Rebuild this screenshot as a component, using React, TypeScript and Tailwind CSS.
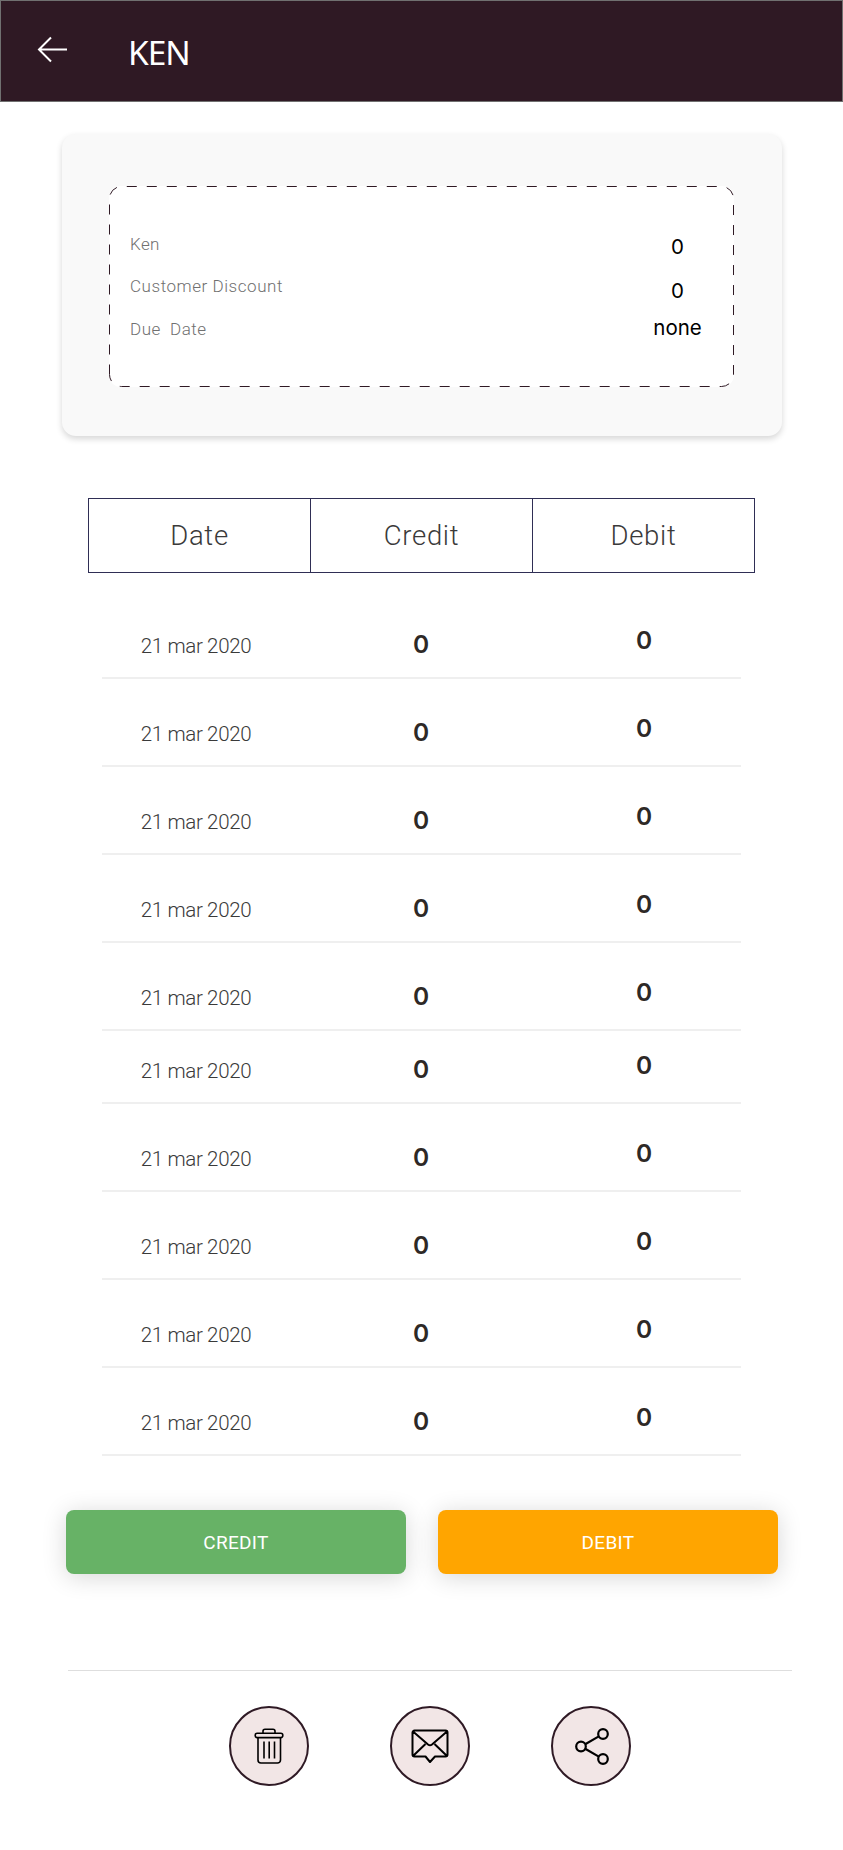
import React from 'react';

const rowHeights = [88, 88, 88, 88, 88, 73, 88, 88, 88, 88];

function IconButton({ label, children }: { label: string; children: React.ReactNode }) {
  return (
    <button
      aria-label={label}
      className="flex h-20 w-20 items-center justify-center rounded-full border-2 border-[#2f1a25] bg-[#f2e6e6]"
    >
      {children}
    </button>
  );
}

export default function App() {
  return (
    <div className="flex h-[1850px] w-[843px] flex-col bg-white font-['Roboto',sans-serif]">
      <header className="flex h-[102px] shrink-0 items-start border border-[#707070] bg-[#2f1924] text-white">
        <svg className="mt-[35px] ml-[36px] h-[28px] w-[32px]" viewBox="0 0 32 28" fill="none" stroke="currentColor" strokeWidth="2">
          <path d="M14 1.5 2 13.5l12 12M2 13.5h28" />
        </svg>
        <h1 className="mt-[28px] ml-[59px] font-['Noto_Sans',sans-serif] text-[33.5px] leading-[46px] tracking-[-1px]">KEN</h1>
      </header>

      <section className="mt-8 ml-[62px] h-[302px] w-[720px] shrink-0 rounded-[14px] bg-[#f9f9f9] pt-[52px] pl-[47px] shadow-[0_3px_6px_rgba(0,0,0,0.16)]">
        <div className="relative flex h-[201px] w-[625px] justify-between rounded-xl bg-white">
          <svg className="absolute inset-0 h-[201px] w-[625px]" viewBox="0 0 625 201" fill="none" stroke="#2f1924" strokeDasharray="10 10">
            <path d="M.5 188.5V12.5A12 12 0 0 1 12.5 .5H612.5A12 12 0 0 1 624.5 12.5V188.5A12 12 0 0 1 612.5 200.5H12.5A12 12 0 0 1 .5 188.5" />
          </svg>
          <div className="flex flex-col pt-[48px] pl-[21px] text-[17px] font-light whitespace-pre text-[#707070]">
            <span className="h-[42px] leading-[20px] tracking-[0.4px]">Ken</span>
            <span className="h-[43px] leading-[20px] tracking-[0.55px]">Customer Discount</span>
            <span className="leading-[20px] tracking-[0.5px]">{'Due  Date'}</span>
          </div>
          <div className="flex w-[113px] flex-col items-center pt-[47px] font-['Inter',sans-serif] text-[20.5px] text-black">
            <span className="h-[44px] leading-[28px]">0</span>
            <span className="h-[37px] leading-[28px]">0</span>
            <span className="leading-[28px]">none</span>
          </div>
        </div>
      </section>

      <div className="mt-[62px] ml-[88px] flex h-[75px] w-[667px] shrink-0 divide-x divide-[#2f2e55] border border-[#2f2e55] text-[27.5px] leading-[73px] font-light text-[#3a3a3a]">
        <div className="w-[222px] text-center tracking-[0.7px]">Date</div>
        <div className="w-[222px] text-center tracking-[0.7px]">Credit</div>
        <div className="flex-1 text-center tracking-[0.7px]">Debit</div>
      </div>

      <div className="mt-[18px] ml-[102px] w-[639px] shrink-0">
        {rowHeights.map((height, i) => (
          <div key={i} style={{ height }} className="flex items-end border-b-2 border-[#efefef] text-[#2d2926]">
            <span className="mb-[18px] w-[188px] text-center text-[20.5px] leading-[26px] font-light tracking-[-0.35px] text-[#3a3a3a]">21 mar 2020</span>
            <span className="mb-[18px] w-[262px] text-center font-['Inter',sans-serif] text-[24.5px] leading-[30px] font-semibold">0</span>
            <span className="mb-[22px] w-[184px] text-center font-['Inter',sans-serif] text-[24.5px] leading-[30px] font-semibold">0</span>
          </div>
        ))}
      </div>

      <div className="mt-[54px] ml-[66px] flex shrink-0 gap-8 text-[19px] font-[450] text-white">
        <button className="h-16 w-[340px] rounded-lg bg-[#67b266] pt-0.5 tracking-[0.3px] shadow-[0_3px_25px_rgba(0,0,0,0.16)]">CREDIT</button>
        <button className="h-16 w-[340px] rounded-lg bg-[#ffa500] pt-0.5 tracking-[0.3px] shadow-[0_3px_25px_rgba(0,0,0,0.16)]">DEBIT</button>
      </div>

      <nav className="mt-[96px] ml-[68px] flex w-[724px] shrink-0 gap-[81px] border-t border-[#dedede] pt-[35px] pl-[161px]">
        <IconButton label="Delete">
          <svg className="h-[36px] w-[30px]" viewBox="0 0 30 36" fill="none" stroke="#000" strokeWidth="1.6">
            <rect x="1.2" y="5.2" width="27.6" height="4.4" rx="2" />
            <path d="M9 5V3.2a2 2 0 0 1 2-2h8a2 2 0 0 1 2 2V5M4 9.8V32a3 3 0 0 0 3 3h16.500a3 3 0 0 0 3-3V9.800M10 13.500v17M15.200 13.500v17M20.500 13.500v17" />
          </svg>
        </IconButton>
        <IconButton label="Message">
          <svg className="h-[34px] w-[38px]" viewBox="0 0 38 34" fill="none" stroke="#000" strokeWidth="2" strokeLinejoin="round">
            <path d="M3.500 1.500h31a2 2 0 0 1 2 2v22a2 2 0 0 1-2 2H24l-5 5.500-4.500-5.500h-11a2 2 0 0 1-2-2v-22a2 2 0 0 1 2-2zM2 2.500l15 13q2 1.500 4 0l15-13M2 27l12.500-12M36 27 23.500 15" />
          </svg>
        </IconButton>
        <IconButton label="Share">
          <svg className="ml-px h-[37px] w-[34px]" viewBox="0 0 34 37" fill="none" stroke="#000" strokeWidth="2.2">
            <circle cx="6" cy="18.500" r="4.800" />
            <circle cx="28" cy="6" r="4.800" />
            <circle cx="28" cy="31" r="4.800" />
            <path d="m10.200 16.200 13.600-7.800M10.200 20.800l13.600 7.800" />
          </svg>
        </IconButton>
      </nav>
    </div>
  );
}
